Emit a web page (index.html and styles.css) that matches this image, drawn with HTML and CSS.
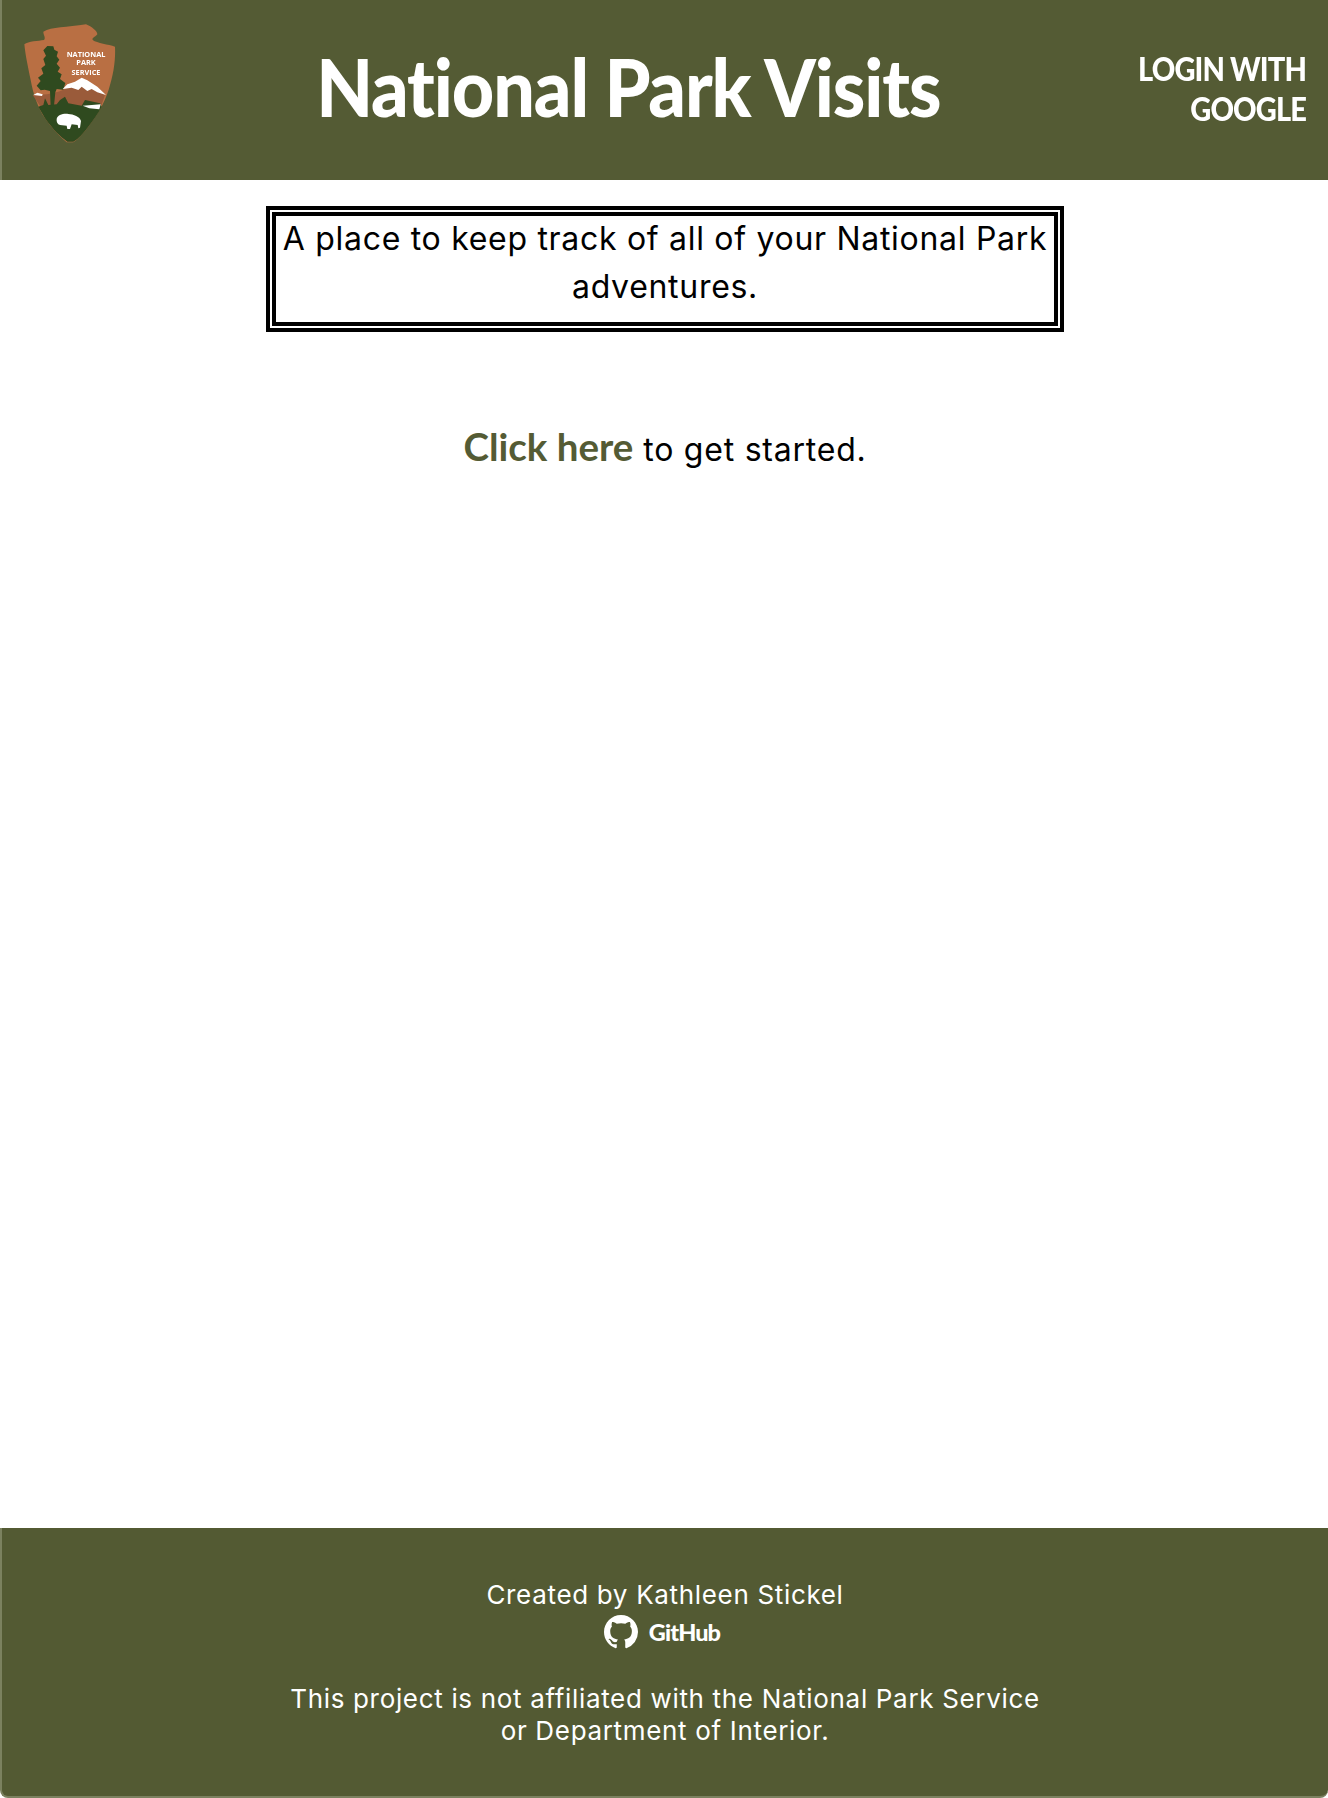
FILE: index.html
```html
<!DOCTYPE html>
<html lang="en">
<head>
<meta charset="utf-8">
<title>National Park Visits</title>
<link rel="stylesheet" href="styles.css">
</head>
<body>
<div class="page">
  <header class="site-header">
    <a class="logo" href="#" aria-label="National Park Service">
      <svg viewBox="0 0 360 405" width="120" height="135">
        <path fill="#b96f43" d="M100 50 C125 35 170 38 228 28 C245 35 262 48 262 58 C258 65 245 68 248 75 C262 85 295 88 315 95 C317 130 312 170 300 210 C290 250 270 290 235 335 C220 355 205 372 190 382 L170 382 C150 365 130 345 105 310 C85 280 70 240 62 195 C55 160 46 120 43 88 C55 78 85 78 102 75 C108 68 100 60 100 50 Z"/>
        <path fill="#9a5b3a" d="M68 240 C110 240 140 235 170 220 L215 205 L285 240 C280 255 275 270 268 285 L95 280 Z"/>
        <path fill="#2f4a1f" d="M85 275 L100 270 L105 250 L115 270 L140 268 L150 255 L165 245 L175 265 L215 272 L225 255 L270 265 L275 275 C265 295 250 315 235 335 C220 355 205 372 190 380 L172 380 C150 365 130 345 105 310 Z"/>
        <path fill="#2f4a1f" d="M112 93 L130 94 L133 104 L144 110 L140 124 L148 134 L140 146 L150 158 L143 170 L155 178 L150 192 L166 204 L160 224 L140 222 L136 232 L132 272 L122 272 L120 228 L104 224 L92 226 L80 212 L92 198 L84 188 L100 176 L94 160 L106 150 L100 132 L108 122 L100 106 Z"/>
        <path fill="#fff" d="M158 222 L172 208 L195 200 L215 188 L232 196 L262 215 L288 240 L262 232 L245 222 L232 228 L215 215 L205 225 L185 218 Z"/>
        <path fill="#fff" d="M70 240 L82 233 L98 238 L96 243 Z"/>
        <path fill="#fff" d="M218 272 L272 268 L268 283 L238 280 Z"/>
        <path fill="#fff" d="M140 312 C142 300 160 295 175 297 C190 298 210 305 213 318 L210 338 L205 340 L203 330 L185 328 L180 342 L172 342 L170 332 L150 330 C142 328 139 320 140 312 Z"/>
        <text class="logo-text" x="228" y="125">NATIONAL</text>
        <text class="logo-text" x="228" y="151">PARK</text>
        <text class="logo-text" x="228" y="180">SERVICE</text>
      </svg>
    </a>
    <h1 class="site-title"><span class="site-title-text">National Park Visits</span></h1>
    <a class="login" href="#">LOGIN WITH<br>GOOGLE</a>
  </header>
  <main class="content">
    <p class="tagline">A place to keep track of all of your National Park adventures.</p>
    <p class="cta"><a href="#">Click here</a> to get started.</p>
  </main>
  <footer class="site-footer">
    <div class="credit">Created by Kathleen Stickel</div>
    <a class="github" href="#">
      <svg viewBox="0 0 16 16" width="34" height="34"><path fill="#fff" d="M8 0C3.58 0 0 3.58 0 8c0 3.54 2.29 6.53 5.47 7.59.4.07.55-.17.55-.38 0-.19-.01-.82-.01-1.49-2.01.37-2.53-.49-2.69-.94-.09-.23-.48-.94-.82-1.13-.28-.15-.68-.52-.01-.53.63-.01 1.08.58 1.23.82.72 1.21 1.87.87 2.33.66.07-.52.28-.87.51-1.07-1.78-.2-3.64-.89-3.64-3.95 0-.87.31-1.59.82-2.15-.08-.2-.36-1.02.08-2.12 0 0 .67-.21 2.2.82.64-.18 1.32-.27 2-.27s1.36.09 2 .27c1.53-1.04 2.2-.82 2.2-.82.44 1.1.16 1.92.08 2.12.51.56.82 1.27.82 2.15 0 3.07-1.87 3.75-3.65 3.95.29.25.54.73.54 1.48 0 1.07-.01 1.93-.01 2.2 0 .21.15.46.55.38A8.01 8.01 0 0 0 16 8c0-4.42-3.58-8-8-8z"/></svg>
      <span>GitHub</span>
    </a>
    <p class="disclaimer">This project is not affiliated with the National Park Service<br>or Department of Interior.</p>
  </footer>
</div>
</body>
</html>
```

FILE: styles.css
```css
html, body { margin: 0; padding: 0; background: #fff; }
.page { display: flex; flex-direction: column; height: 1798px; font-family: "Inter", "Noto Sans", sans-serif; color: #000; }
.site-header { flex: 0 0 180px; display: flex; align-items: flex-start; background: #545b34; border-left: 2px solid #7b815f; box-sizing: border-box; }
.logo { flex: 0 0 120px; margin: 15px 0 0 8px; display: block; line-height: 0; filter: blur(0.4px); }
.logo-text { font-family: "Open Sans", sans-serif; font-size: 22px; font-weight: 700; fill: #fff; text-anchor: middle; }
.site-title { flex: 1; margin: 41px 0 0; padding-left: 20px; text-align: center; font-family: "Lato", sans-serif; font-weight: 900; font-size: 80px; line-height: 90px; letter-spacing: -1.2px; color: #fff; white-space: nowrap; }
.site-title-text { display: inline-block; transform: scaleX(0.92); }
.login { flex: 0 0 200px; margin: 48px 22px 0 0; text-align: right; font-family: "Lato", sans-serif; font-weight: 900; font-size: 33px; line-height: 40px; letter-spacing: -1px; color: #fff; text-decoration: none; transform: scaleX(0.88); transform-origin: right center; white-space: nowrap; }
.content { flex: 1; display: flex; flex-direction: column; align-items: center; }
.tagline { box-sizing: border-box; width: 798px; height: 126px; margin: 26px 0 0 2px; padding: 5px 10px 0; border: 4px solid #000; box-shadow: inset 0 0 0 2px #fff, inset 0 0 0 6px #000; text-align: center; font-size: 32px; line-height: 48px; letter-spacing: 0.7px; }
.cta { margin: 89.5px 0 0 2px; font-size: 32px; line-height: 48px; letter-spacing: 0.77px; }
.cta a { font-family: "Lato", sans-serif; font-weight: 700; font-size: 38.5px; letter-spacing: 0; color: #545b34; text-decoration: none; }
.site-footer { flex: 0 0 270px; box-sizing: border-box; background: #535a33; color: #fff; display: flex; flex-direction: column; align-items: center; font-size: 26px; letter-spacing: 0.67px; border-left: 2px solid #7b815f; border-bottom: 2px solid #7b815f; border-radius: 0 0 8px 8px; }
.credit { margin-top: 51px; line-height: 32px; }
.github { display: flex; align-items: center; gap: 11px; margin: 3px 6px 0 0; height: 36px; color: #fff; text-decoration: none; font-family: "Lato", sans-serif; font-weight: 900; font-size: 23.5px; letter-spacing: -0.9px; }
.disclaimer { margin: 33px 0 0; text-align: center; line-height: 32px; }
```
